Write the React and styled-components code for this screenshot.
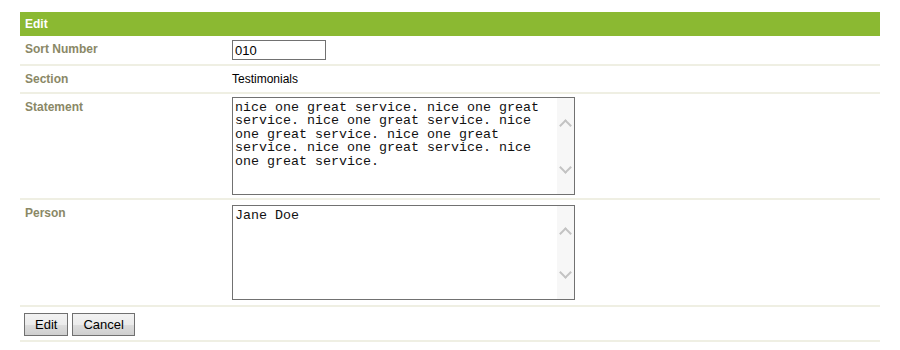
import React, { useState } from "react";
import styled, { createGlobalStyle } from "styled-components";

const GlobalStyle = createGlobalStyle`
  body {
    margin: 0;
    background: #fff;
    font-family: "Liberation Sans", Arial, sans-serif;
  }
`;

function App() {
  const [sort, setSort] = useState("010");
  const [statement, setStatement] = useState(
    "nice one great service. ".repeat(7).trim()
  );
  const [person, setPerson] = useState("Jane Doe");

  return (
    <Page>
      <GlobalStyle />
      <Form>
        <Header>Edit</Header>

        <Row>
          <Label>Sort Number</Label>
          <Value $pad="4px">
            <TextInput value={sort} onChange={(e) => setSort(e.target.value)} />
          </Value>
        </Row>

        <Row>
          <Label>Section</Label>
          <Value $pad="6px 4px">Testimonials</Value>
        </Row>

        <Row>
          <Label>Statement</Label>
          <Value $pad="3px 4px">
            <AreaBox $h={98}>
              <Area
                value={statement}
                onChange={(e) => setStatement(e.target.value)}
              />
              <ScrollTrack>
                <Chevron />
                <Chevron $down />
              </ScrollTrack>
            </AreaBox>
          </Value>
        </Row>

        <Row>
          <Label>Person</Label>
          <Value $pad="5px 4px">
            <AreaBox $h={95}>
              <Area value={person} onChange={(e) => setPerson(e.target.value)} />
              <ScrollTrack>
                <Chevron />
                <Chevron $down />
              </ScrollTrack>
            </AreaBox>
          </Value>
        </Row>

        <ButtonRow>
          <Button>Edit</Button>
          <Button>Cancel</Button>
        </ButtonRow>
      </Form>
    </Page>
  );
}
export default App;

const Page = styled.div`
  padding: 12px 20px;
`;

const Form = styled.div`
  width: 860px;
`;

const Header = styled.div`
  background: #8bb932;
  color: #fff;
  font-weight: bold;
  font-size: 12px;
  height: 24px;
  line-height: 24px;
  padding: 0 5px;
`;

const Row = styled.div`
  display: grid;
  grid-template-columns: 208px 1fr;
  border-bottom: 2px solid #efefe3;
`;

const Label = styled.div`
  padding: 6px 5px 0;
  font-size: 12px;
  line-height: 14px;
  font-weight: bold;
  color: #8a8866;
`;

const Value = styled.div`
  padding: ${(p) => p.$pad};
  font-size: 12px;
  line-height: 14px;
  color: #000;
`;

const TextInput = styled.input`
  box-sizing: border-box;
  width: 94px;
  height: 20px;
  border: 1px solid #717171;
  padding: 0 2px;
  margin: 0;
  font-family: "Liberation Sans", Arial, sans-serif;
  font-size: 13px;
  color: #000;
  outline: none;
`;

const AreaBox = styled.div`
  box-sizing: border-box;
  display: flex;
  width: 343px;
  height: ${(p) => p.$h}px;
  border: 1px solid #717171;
  background: #fff;
`;

const Area = styled.textarea`
  flex: 1;
  border: none;
  outline: none;
  resize: none;
  overflow: hidden;
  margin: 0;
  padding: 3px 2px 2px;
  font-family: "Liberation Mono", "Courier New", monospace;
  font-size: 13.33px;
  line-height: 13.4px;
  color: #111;
  background: #fff;
`;

const ScrollTrack = styled.div`
  width: 17px;
  background: #f7f7f7;
  display: flex;
  flex-direction: column;
  justify-content: space-between;
  align-items: center;
  padding: 20px 0 19px;
`;

const Chevron = styled.span`
  width: 7px;
  height: 7px;
  border-left: 2px solid #c3c3c3;
  border-top: 2px solid #c3c3c3;
  transform: ${(p) => (p.$down ? "rotate(225deg)" : "rotate(45deg)")};
  margin: ${(p) => (p.$down ? "0 0 3px" : "3px 0 0")};
`;

const ButtonRow = styled.div`
  display: flex;
  gap: 4px;
  padding: 6px 4px 4px;
  border-bottom: 2px solid #efefe3;
`;

const Button = styled.button`
  height: 23px;
  padding: 0 10px;
  border: 1px solid #707070;
  border-radius: 0;
  background: linear-gradient(#f2f2f2, #ebebeb 50%, #dddddd 51%, #cfcfcf);
  font-family: "Liberation Sans", Arial, sans-serif;
  font-size: 13px;
  color: #000;
  cursor: pointer;
`;
